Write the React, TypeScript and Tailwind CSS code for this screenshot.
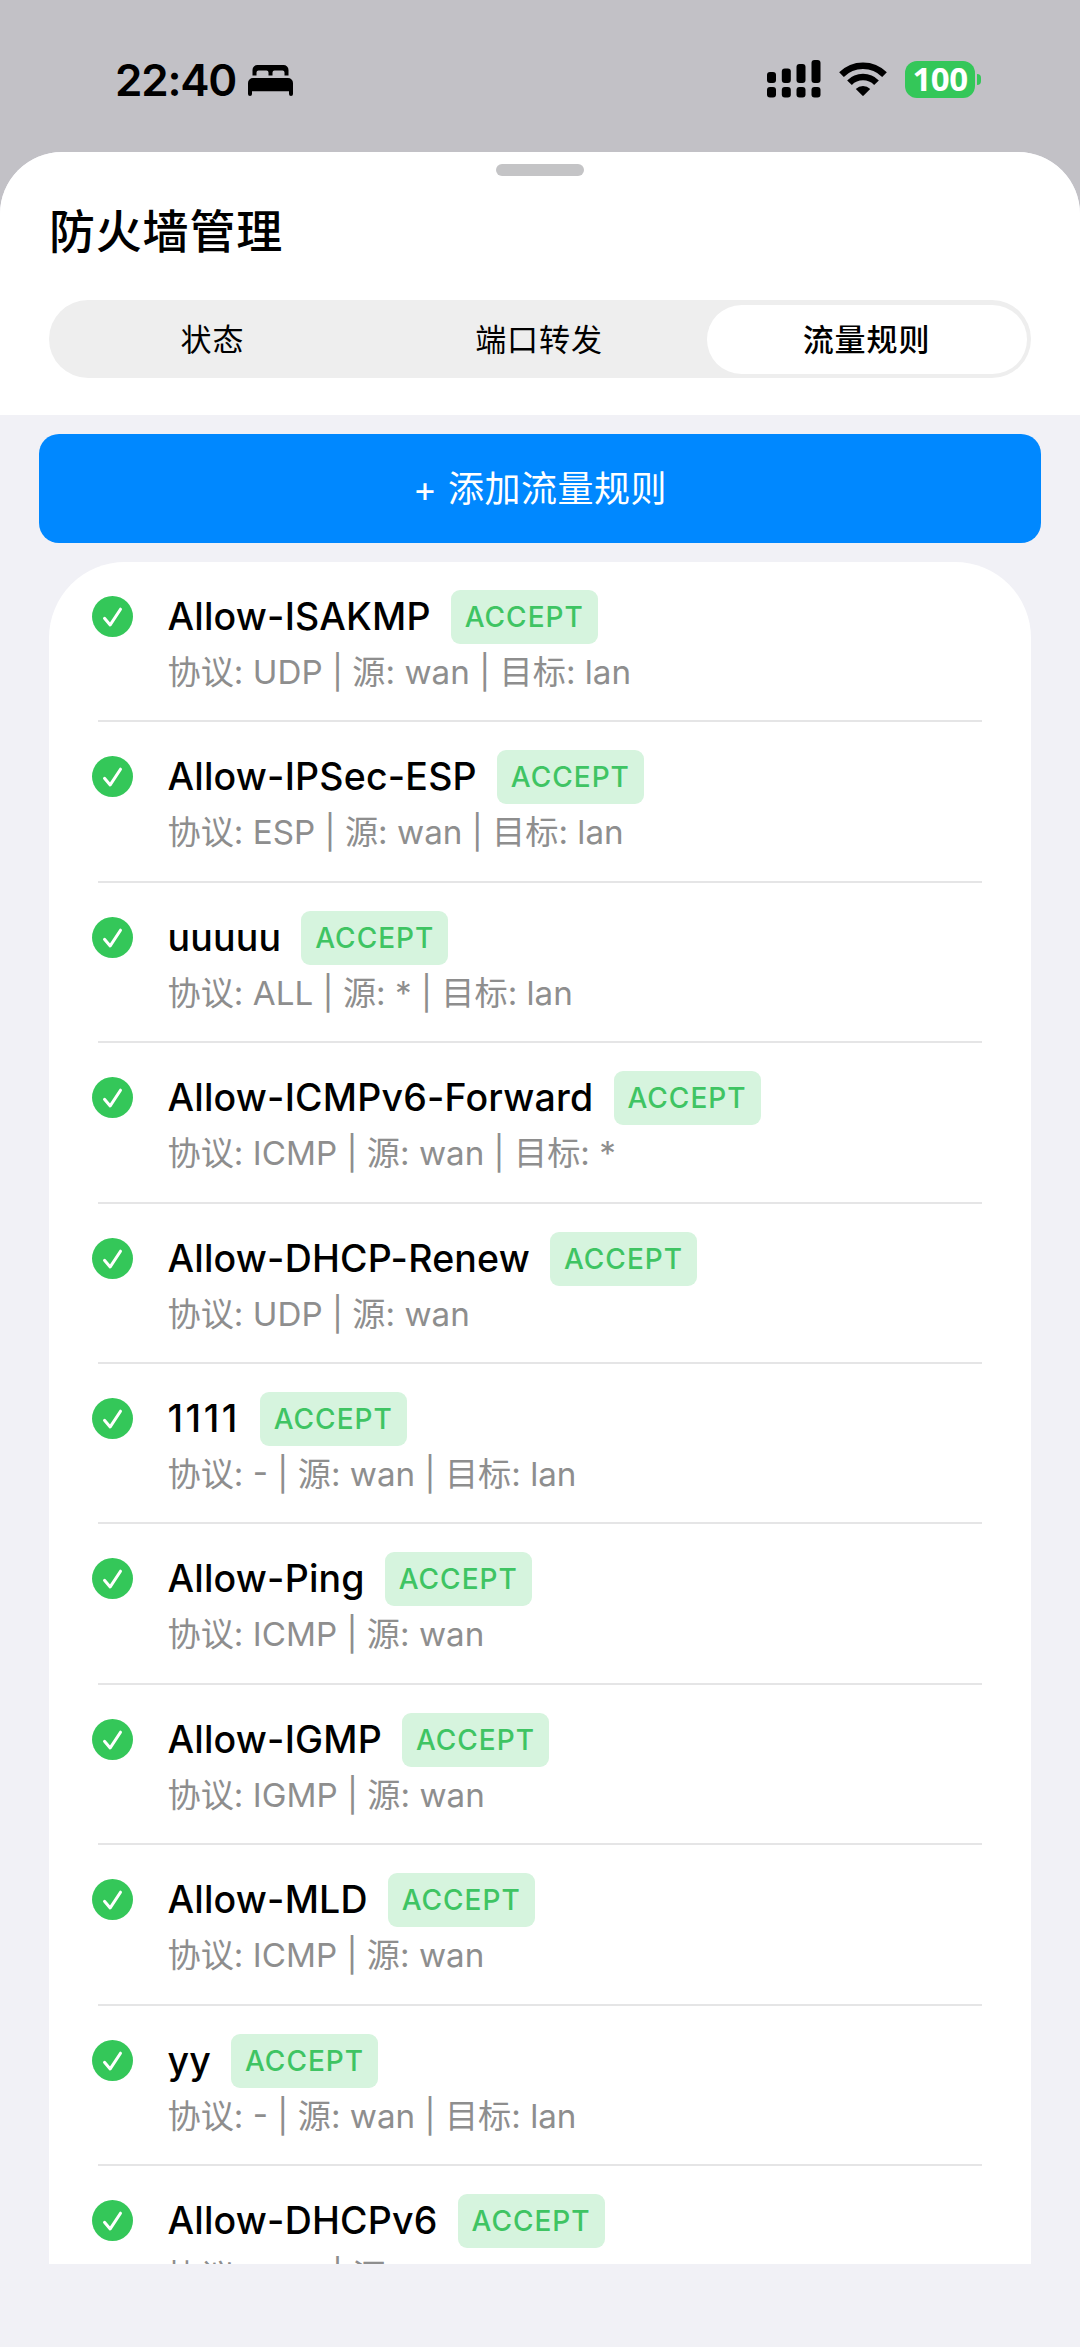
type Rule = {
  name: string;
  detail: string;
};

const rules: Rule[] = [
  { name: "Allow-ISAKMP", detail: "协议: UDP | 源: wan | 目标: lan" },
  { name: "Allow-IPSec-ESP", detail: "协议: ESP | 源: wan | 目标: lan" },
  { name: "uuuuu", detail: "协议: ALL | 源: * | 目标: lan" },
  { name: "Allow-ICMPv6-Forward", detail: "协议: ICMP | 源: wan | 目标: *" },
  { name: "Allow-DHCP-Renew", detail: "协议: UDP | 源: wan" },
  { name: "1111", detail: "协议: - | 源: wan | 目标: lan" },
  { name: "Allow-Ping", detail: "协议: ICMP | 源: wan" },
  { name: "Allow-IGMP", detail: "协议: IGMP | 源: wan" },
  { name: "Allow-MLD", detail: "协议: ICMP | 源: wan" },
  { name: "yy", detail: "协议: - | 源: wan | 目标: lan" },
  { name: "Allow-DHCPv6", detail: "协议: UDP | 源: wan" },
];

const tabs = ["状态", "端口转发", "流量规则"];
const activeTab = "流量规则";

function BedIcon() {
  return (
    <svg width="45" height="31" viewBox="0 0 45 31" className="ml-[12px]">
      <path d="M4.500 10.500V5a5 5 0 0 1 5-5h26a5 5 0 0 1 5 5v5.500h-4V7.500a2 2 0 0 0-2-2H26.500a2 2 0 0 0-2 2v3h-4v-3a2 2 0 0 0-2-2H10.500a2 2 0 0 0-2 2v3z" />
      <path d="M0 18a5 5 0 0 1 5-5h35a5 5 0 0 1 5 5v11a2 2 0 0 1-4 0v-2.800H4V29a2 2 0 0 1-4 0z" />
    </svg>
  );
}

function SignalIcon() {
  return (
    <svg width="54" height="38" viewBox="0 0 54 38">
      <rect x="0" y="12" width="9" height="11" rx="3" />
      <rect x="14.800" y="8.500" width="9" height="14.500" rx="3" />
      <rect x="29.500" y="4" width="9" height="19" rx="3" />
      <rect x="44.500" y="0" width="9" height="23" rx="3" />
      <rect x="0" y="27" width="9" height="10.500" rx="3" />
      <rect x="14.800" y="27" width="9" height="10.500" rx="3" />
      <rect x="29.500" y="27" width="9" height="10.500" rx="3" />
      <rect x="44.500" y="27" width="9" height="10.500" rx="3" />
    </svg>
  );
}

function WifiIcon() {
  return (
    <svg width="48" height="34" viewBox="0 0 48 34" className="ml-[18px]">
      <g fill="none" stroke="#000" strokeWidth="6.600">
        <path d="M2.500 12.700a30.400 30.400 0 0 1 43 0" />
        <path d="M10.500 20.700a19 19 0 0 1 27 0" />
      </g>
      <path d="M16.800 27a10.300 10.300 0 0 1 14.400 0L24.700 33.600a1 1 0 0 1-1.400 0z" />
    </svg>
  );
}

function StatusBar() {
  return (
    <div className="flex h-[152px] items-start justify-between pr-[99px] pl-[115px]">
      <div className="mt-[53px] flex h-[54px] items-center">
        <span className="text-[44px] leading-[54px] font-semibold tracking-[-1.2px]">
          22:40
        </span>
        <BedIcon />
      </div>
      <div className="mt-[60px] flex items-center">
        <SignalIcon />
        <WifiIcon />
        <div className="ml-[18px] flex h-[37px] w-[70px] items-center justify-center rounded-[12px] bg-[#34c759] pb-[2px] font-['Noto_Sans',sans-serif] text-[33px] leading-[37px] font-bold tracking-[-0.5px] text-white">
          100
        </div>
        <div className="ml-[2px] h-[11px] w-[4px] rounded-r-full bg-[#34c759]" />
      </div>
    </div>
  );
}

function Tabs() {
  return (
    <div className="mx-[49px] mt-[39px] grid h-[78px] grid-cols-[318px_335px_320px] rounded-full bg-[#eee] p-[4.500px]">
      {tabs.map((tab) => (
        <button
          key={tab}
          className={
            tab === activeTab
              ? "rounded-full bg-white text-[31px] leading-none font-medium tracking-[0.900px]"
              : "text-[31px] leading-none tracking-[0.900px]"
          }
        >
          {tab}
        </button>
      ))}
    </div>
  );
}

function CheckCircle() {
  return (
    <svg
      width="41"
      height="41"
      viewBox="0 0 41 41"
      className="mt-[34px] shrink-0"
    >
      <circle cx="20.500" cy="20.500" r="20.500" fill="#34c759" />
      <path
        d="M12.500 22.300l5.700 6.600 10.300-15.700"
        fill="none"
        stroke="#fff"
        strokeWidth="3"
        strokeLinecap="round"
        strokeLinejoin="round"
      />
    </svg>
  );
}

function RuleRow({ rule }: { rule: Rule }) {
  const isNumeric = /^\d+$/.test(rule.name);

  return (
    <li className="flex h-[160.400px] flex-col">
      <div className="flex flex-1 pl-[43px]">
        <CheckCircle />
        <div className="ml-[34.500px] pt-[28px]">
          <div className="flex h-[54px] items-center">
            <span
              className={
                isNumeric
                  ? "text-[37.500px] leading-[54px] font-medium tracking-[2.500px] whitespace-nowrap"
                  : "text-[37.500px] leading-[54px] font-medium tracking-[0.200px] whitespace-nowrap"
              }
            >
              {rule.name}
            </span>
            <span className="ml-[20px] flex h-[54px] w-[147px] items-center justify-center rounded-[9px] bg-[#d6f4de] text-[28px] font-medium tracking-[1px] text-[#3fc463]">
              ACCEPT
            </span>
          </div>
          <p className="mt-px text-[33.200px] leading-[54px] whitespace-nowrap text-[#8e8e8e]">
            {rule.detail}
          </p>
        </div>
      </div>
      <div className="mx-[49px] h-[2px] shrink-0 bg-[#e5e5e6]" />
    </li>
  );
}

export default function App() {
  return (
    <div className="h-[2347px] w-[1080px] overflow-hidden bg-[#c2c1c6] font-['Inter','Noto_Sans_CJK_SC',sans-serif] text-black">
      <StatusBar />
      <div className="flex h-[2195px] flex-col overflow-hidden rounded-t-[62px] bg-[#f1f1f6]">
        <header className="h-[263px] shrink-0 bg-white pt-[12px]">
          <div className="mx-auto h-[12px] w-[88px] rounded-full bg-[#c4c4c6]" />
          <h1 className="mt-[25px] ml-[49px] text-[46px] leading-[60px] font-medium tracking-[0.800px]">
            防火墙管理
          </h1>
          <Tabs />
        </header>

        <button className="mx-[39px] mt-[19px] h-[109px] shrink-0 rounded-[20px] bg-[#08f] text-[36px] tracking-[0.500px] text-white">
          + 添加流量规则
        </button>

        <ul className="mx-[49px] mt-[19px] h-[1702px] shrink-0 overflow-hidden rounded-t-[76px] bg-white">
          {rules.map((rule) => (
            <RuleRow key={rule.name} rule={rule} />
          ))}
        </ul>
      </div>
    </div>
  );
}
